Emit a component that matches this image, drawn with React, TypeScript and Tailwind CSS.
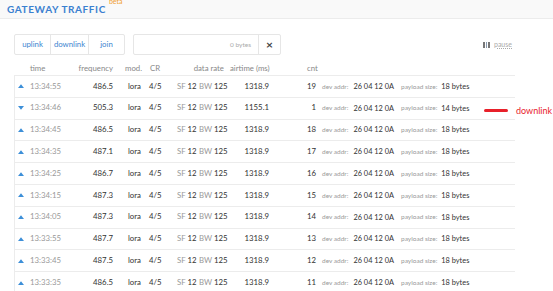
import React from 'react'

type Packet = {
  dir: 'up' | 'down'
  time: string
  freq: string
  air: string
  cnt: number
  size: number
}

const PACKETS: Packet[] = [
  { dir: 'up', time: '13:34:55', freq: '486.5', air: '1318.9', cnt: 19, size: 18 },
  { dir: 'down', time: '13:34:46', freq: '505.3', air: '1155.1', cnt: 1, size: 14 },
  { dir: 'up', time: '13:34:45', freq: '486.5', air: '1318.9', cnt: 18, size: 18 },
  { dir: 'up', time: '13:34:35', freq: '487.1', air: '1318.9', cnt: 17, size: 18 },
  { dir: 'up', time: '13:34:25', freq: '486.7', air: '1318.9', cnt: 16, size: 18 },
  { dir: 'up', time: '13:34:15', freq: '487.3', air: '1318.9', cnt: 15, size: 18 },
  { dir: 'up', time: '13:34:05', freq: '487.3', air: '1318.9', cnt: 14, size: 18 },
  { dir: 'up', time: '13:33:55', freq: '487.7', air: '1318.9', cnt: 13, size: 18 },
  { dir: 'up', time: '13:33:45', freq: '487.5', air: '1318.9', cnt: 12, size: 18 },
  { dir: 'up', time: '13:33:35', freq: '486.5', air: '1318.9', cnt: 11, size: 18 },
]

function Arrow({ dir }: { dir: 'up' | 'down' }) {
  return (
    <svg width="6" height="4" viewBox="0 0 6 4" className="shrink-0">
      {dir === 'up' ? (
        <polygon points="0,4 3,0.3 6,4" fill="#3d8fd8" />
      ) : (
        <polygon points="0,0 3,3.7 6,0" fill="#3d8fd8" />
      )}
    </svg>
  )
}

function Row({ p }: { p: Packet }) {
  return (
    <div className="relative flex h-[21.8px] items-center whitespace-nowrap border-b border-[#ececec] text-[7.8px] text-[#333]">
      <div className="flex w-[11px] shrink-0 pl-[3px]">
        <Arrow dir={p.dir} />
      </div>
      <span className="w-[44px] shrink-0 pl-[4px] text-[#999]">{p.time}</span>
      <span className="w-[43px] shrink-0 text-right">{p.freq}</span>
      <span className="w-[36px] shrink-0 pl-[15px]">lora</span>
      <span className="w-[28px] shrink-0">4/5</span>
      <span className="w-[22px] shrink-0">
        <span className="text-[#999]">SF</span> 12
      </span>
      <span className="w-[25px] shrink-0">
        <span className="text-[#999]">BW</span> 125
      </span>
      <span className="w-[45px] shrink-0 text-right">{p.air}</span>
      <span className="w-[47px] shrink-0 text-right">{p.cnt}</span>
      <span className="shrink-0 pl-[6px] text-[6.5px] text-[#999]">dev addr:</span>
      <span className="shrink-0 pl-[5px] text-[7.4px]">26 04 12 0A</span>
      <span className="shrink-0 pl-[7px] text-[6.5px] text-[#999]">payload size:</span>
      <span className="shrink-0 pl-[4px] text-[7.4px]">{p.size} bytes</span>
      {p.dir === 'down' && (
        <div className="absolute left-[469px] top-[9px] flex w-[80px] items-center">
          <div className="h-[3px] w-[24px] shrink-0 rounded-full bg-[#e8202a]" />
          <span className="ml-[8px] mt-[-1px] shrink-0 text-[9px] leading-none text-[#e8202a]">downlink</span>
        </div>
      )}
    </div>
  )
}

export default function App() {
  return (
    <div className="h-[291px] w-[553px] overflow-hidden bg-white font-['Lato','Liberation_Sans',sans-serif]">
      {/* Header */}
      <div className="flex h-[19px] items-start border-b border-[#ececec] bg-[#f9f9f9] pl-[7px]">
        <span className="mt-[4px] text-[10px] font-bold leading-none tracking-[0.6px] text-[#3a80d0]">
          GATEWAY TRAFFIC
        </span>
        <span className="ml-[3px] mt-[-2px] text-[7px] leading-none text-[#f0a030]">beta</span>
      </div>

      {/* Controls */}
      <div className="mt-[15px] flex items-center pl-[14px]">
        <div className="flex h-[21px] overflow-hidden rounded-[2px] border border-[#e6e6e6] text-[7.8px] text-[#3d84cf]">
          <span className="flex w-[36px] items-center justify-center border-r border-[#e6e6e6]">uplink</span>
          <span className="flex w-[38px] items-center justify-center border-r border-[#e6e6e6]">downlink</span>
          <span className="flex w-[35px] items-center justify-center">join</span>
        </div>
        <div className="ml-[8px] flex h-[21px] w-[148px] items-center rounded-[2px] border border-[#e6e6e6]">
          <span className="flex-1 pr-[7px] text-right text-[6.5px] text-[#aaa]">0 bytes</span>
          <span className="flex h-full w-[22px] items-center justify-center border-l border-[#e6e6e6] text-[12px] font-bold text-[#444]">
            ×
          </span>
        </div>
        <div className="ml-auto mr-[41px] flex items-center gap-[4px] text-[7px] text-[#aaa]">
          <span className="flex gap-[1px]">
            <span className="h-[6px] w-[1.5px] bg-[#777]" />
            <span className="h-[6px] w-[1.5px] bg-[#8a9bb0]" />
            <span className="h-[6px] w-[1.5px] bg-[#777]" />
          </span>
          <span className="underline decoration-dotted">pause</span>
        </div>
      </div>

      {/* Column headings */}
      <div className="mt-[7px] flex h-[13px] items-center whitespace-nowrap text-[7.8px] text-[#888]">
        <span className="w-[30px] shrink-0" />
        <span className="flex w-[83px] shrink-0 justify-between">
          <span>time</span>
          <span>frequency</span>
        </span>
        <span className="w-[37px] shrink-0 pl-[12px]">mod.</span>
        <span className="flex w-[74px] shrink-0 justify-between">
          <span>CR</span>
          <span>data rate</span>
        </span>
        <span className="w-[83px] shrink-0 pl-[6px]">airtime (ms)</span>
        <span className="shrink-0">cnt</span>
      </div>

      {/* Rows */}
      <div className="ml-[14px] w-[501px] border-l border-t border-[#ececec]">
        {PACKETS.map((p) => (
          <Row key={p.time} p={p} />
        ))}
      </div>
    </div>
  )
}
